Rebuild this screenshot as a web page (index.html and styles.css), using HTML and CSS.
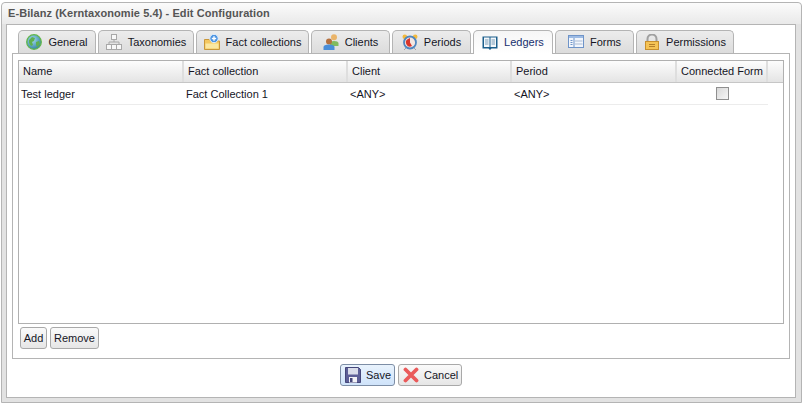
FILE: index.html
```html
<!DOCTYPE html>
<html lang="en">
<head>
<meta charset="utf-8">
<title>Edit Configuration</title>
<link rel="stylesheet" href="styles.css">
</head>
<body>
<div class="dialog">
  <div class="title">E-Bilanz (Kerntaxonomie 5.4) - Edit Configuration</div>
  <div class="content">
    <div class="tabs">
      <div class="tab w-general">
        <svg class="ico" viewBox="0 0 16 16"><defs><radialGradient id="g1" cx=".4" cy=".35" r=".7"><stop offset="0" stop-color="#a5dcf2"/><stop offset="1" stop-color="#2f7f9c"/></radialGradient></defs><circle cx="8" cy="8" r="7.300" fill="url(#g1)" stroke="#62b84c" stroke-width="1.300"/><path d="M3 6l3-3 3 1-1 3-2 1 1 3-2 1-2-3zM10 8l3-1 1 3-3 3-1-2z" fill="#5fb050"/></svg>
        <span>General</span>
      </div>
      <div class="tab w-tax">
        <svg class="ico" viewBox="0 0 16 16" fill="#f8f8f8" stroke="#a8a8a8"><rect x="5.500" y=".5" width="5" height="5"/><path d="M8 5.500v2.500M3 11V8h10v3" fill="none"/><rect x=".5" y="10.500" width="5" height="5"/><rect x="5.500" y="10.500" width="5" height="5"/><rect x="10.500" y="10.500" width="5" height="5"/></svg>
        <span>Taxonomies</span>
      </div>
      <div class="tab w-fact">
        <svg class="ico" viewBox="0 0 16 16"><path d="M.5 5.500h5l1 1.500h9v8.500H.500z" fill="#f4c860" stroke="#c9973a"/><rect x="1.500" y="9.500" width="13" height="5" fill="#fbe7a0"/><circle cx="10" cy="4.500" r="4.200" fill="#4e95e2" stroke="#e6f0fb"/><path d="M7.800 4.500h4.400M10 2.300v4.400" stroke="#fff" stroke-width="1.400"/></svg>
        <span>Fact collections</span>
      </div>
      <div class="tab w-clients">
        <svg class="ico" viewBox="0 0 16 16"><circle cx="11" cy="3.300" r="3" fill="#eab469"/><path d="M7 12V9q0-2 4-2t4.500 2v3z" fill="#82bb5e"/><circle cx="6" cy="7.500" r="3" fill="#b5713f"/><path d="M.5 16v-3q0-2.500 5.500-2.500t5.500 2.500v3z" fill="#4a8ed8"/></svg>
        <span>Clients</span>
      </div>
      <div class="tab w-periods">
        <svg class="ico" viewBox="0 0 16 16"><circle cx="2.800" cy="2.800" r="2.300" fill="#f2b93c"/><circle cx="13.200" cy="2.800" r="2.300" fill="#f2b93c"/><circle cx="8" cy="8.500" r="6" fill="#f4e6e0" stroke="#4f86c0" stroke-width="1.800"/><path d="M8 4v4.500L10 12A4 4 0 0 1 6 5z" fill="#d8352a"/><path d="M3.500 14.500l-1 1M12.500 14.500l1 1" stroke="#667"/></svg>
        <span>Periods</span>
      </div>
      <div class="tab active w-ledgers">
        <svg class="ico" viewBox="0 0 16 16"><path d="M.5 1.500h15v12h-6l-1.500 1.500-1.500-1.500h-6z" fill="#1c5f8c"/><path d="M2 2.500h5.500v9.500H2zM8.500 2.500H14v9.500H8.500z" fill="#f4f8fb"/><path d="M3 5h3.500M3 7h3.500M3 9h3.500M9.500 5H13M9.500 7H13M9.500 9H13" stroke="#7a9db8"/></svg>
        <span>Ledgers</span>
      </div>
      <div class="tab w-forms">
        <svg class="ico" viewBox="0 0 16 16"><rect x=".5" y="1.500" width="15" height="12" fill="#f2f6fc" stroke="#6f94c8"/><rect x="1" y="2" width="14" height="2" fill="#9dbbe4"/><path d="M2.500 6.500h2M2.500 8.500h2M2.500 10.500h2M6 4v9.500" stroke="#6f94c8"/><path d="M7 7h7.500M7 10h7.500" stroke="#aabbd4"/></svg>
        <span>Forms</span>
      </div>
      <div class="tab w-perm">
        <svg class="ico" viewBox="0 0 16 16"><path d="M3.500 8V5a4.500 4.500 0 0 1 9 0v3" fill="none" stroke="#a0a0a0" stroke-width="2"/><rect x="1.500" y="7.500" width="13" height="8" fill="#f5c355" stroke="#c8902e"/><path d="M5 10.500h6M5 12.500h6" stroke="#b57f2a"/></svg>
        <span>Permissions</span>
      </div>
    </div>
    <div class="panel">
      <div class="grid">
        <div class="head">
          <div class="hc c-name">Name</div>
          <div class="hc c-fact">Fact collection</div>
          <div class="hc c-client">Client</div>
          <div class="hc c-period">Period</div>
          <div class="hc c-form">Connected Form</div>
          <div class="hc c-end"></div>
        </div>
        <div class="row">
          <div class="cell c-name">Test ledger</div>
          <div class="cell c-fact">Fact Collection 1</div>
          <div class="cell c-client">&lt;ANY&gt;</div>
          <div class="cell c-period">&lt;ANY&gt;</div>
          <div class="cell c-form center"><span class="check"></span></div>
        </div>
      </div>
      <div class="gridbar">
        <div class="btn w-add">Add</div>
        <div class="btn w-remove">Remove</div>
      </div>
    </div>
    <div class="actions">
      <div class="btn big focus w-save">
        <svg class="ico" viewBox="0 0 16 16"><path d="M.5.500h13l2 2v13H.500z" fill="#5d5f97" stroke="#45477a"/><rect x="3" y="1" width="10" height="6.500" fill="#d9dcea"/><rect x="4" y="10" width="8" height="5.500" fill="#f2f2f6"/><rect x="5" y="11" width="2.500" height="4" fill="#45477a"/></svg>
        <span>Save</span>
      </div>
      <div class="btn big w-cancel">
        <svg class="ico" viewBox="0 0 16 16"><path d="M2.500 2.500l11 11M13.500 2.500l-11 11" stroke="#ea5a5a" stroke-width="3.800" stroke-linecap="round"/></svg>
        <span>Cancel</span>
      </div>
    </div>
  </div>
</div>
</body>
</html>
```

FILE: styles.css
```css
* { box-sizing: border-box; }
html, body { margin: 0; height: 100%; background: #fff; }
body {
  font: 11px/13px "Liberation Sans", Arial, sans-serif;
  color: #15151f;
  padding: 2px 2px 1px 1px;
}
.dialog {
  height: 401px;
  display: flex;
  flex-direction: column;
  background: #e2e2e2;
  border: 1px solid #b4b4b4;
  border-radius: 4px 4px 0 0;
  padding: 0 5px 4px 4px;
}
.title {
  flex: none;
  height: 21px;
  margin: 0 -5px 0 -4px;
  padding: 4px 6px 0;
  font-weight: bold;
  letter-spacing: .08px;
  color: #555;
  background: linear-gradient(#fbfbfb, #e9e9e9);
  border-radius: 4px 4px 0 0;
}
.content {
  flex: 1;
  display: flex;
  flex-direction: column;
  background: #fff;
  border: 1px solid #b4b4b4;
  padding: 5px 5px 0 5px;
}
.tabs {
  flex: none;
  display: flex;
  gap: 2px;
  height: 23px;
  padding-left: 6px;
  position: relative;
  z-index: 1;
}
.tab {
  height: 23px;
  display: flex;
  align-items: center;
  justify-content: center;
  gap: 6px;
  border: 1px solid #b4b4b4;
  border-bottom: 0;
  border-radius: 5px 5px 0 0;
  background: linear-gradient(#ececec, #dcdcdc);
}
.tab.active {
  height: 24px;
  background: linear-gradient(#f6f6f6, #fff);
  color: #17306e;
}
.ico { width: 16px; height: 16px; flex: none; display: block; }
.w-general { width: 78px; }
.w-tax { width: 96px; }
.w-fact { width: 113px; }
.w-clients { width: 79px; }
.w-periods { width: 79px; }
.w-ledgers { width: 80px; }
.w-forms { width: 79px; }
.w-perm { width: 98px; }
.panel {
  flex: none;
  height: 306px;
  border: 1px solid #b4b4b4;
  padding: 6px 5px 0;
  background: #fff;
}
.grid {
  height: 264px;
  border: 1px solid #b0b0b0;
}
.head {
  display: grid;
  grid-template-columns: 165px 164px 164px 165px 91px 15px;
  height: 22px;
  border-bottom: 1px solid #c6c6c6;
  background: linear-gradient(#fdfdfd, #e4e4e4);
}
.hc {
  padding: 4px 0 0 4px;
  border-right: 2px solid #dedede;
}
.hc.c-end { border-right: 0; }
.row {
  display: grid;
  grid-template-columns: 165px 164px 164px 165px 91px;
  width: 749px;
  height: 22px;
  border-bottom: 1px solid #ececec;
}
.cell { padding: 5px 0 0 2px; }
.center { display: flex; justify-content: center; padding: 4px 0 0; }
.check {
  width: 13px;
  height: 13px;
  border: 1px solid #8f8f8f;
  background: linear-gradient(135deg, #d8d8d8, #f6f6f6);
}
.gridbar {
  display: flex;
  gap: 3px;
  padding: 3px 0 0 2px;
}
.btn {
  height: 22px;
  display: flex;
  align-items: center;
  justify-content: center;
  border: 1px solid #a9a9a9;
  border-radius: 3px;
  background: linear-gradient(#fafafa, #e6e6e6);
}
.w-add { width: 27px; }
.w-remove { width: 49px; }
.actions {
  display: flex;
  justify-content: center;
  gap: 3px;
  padding-top: 5px;
}
.big { gap: 5px; justify-content: flex-start; padding-left: 4px; }
.focus {
  border-color: #7d8ea6;
  background: linear-gradient(#e9f3fd, #cfe3fa);
}
.w-save { width: 55px; }
.w-cancel { width: 64px; }
```
